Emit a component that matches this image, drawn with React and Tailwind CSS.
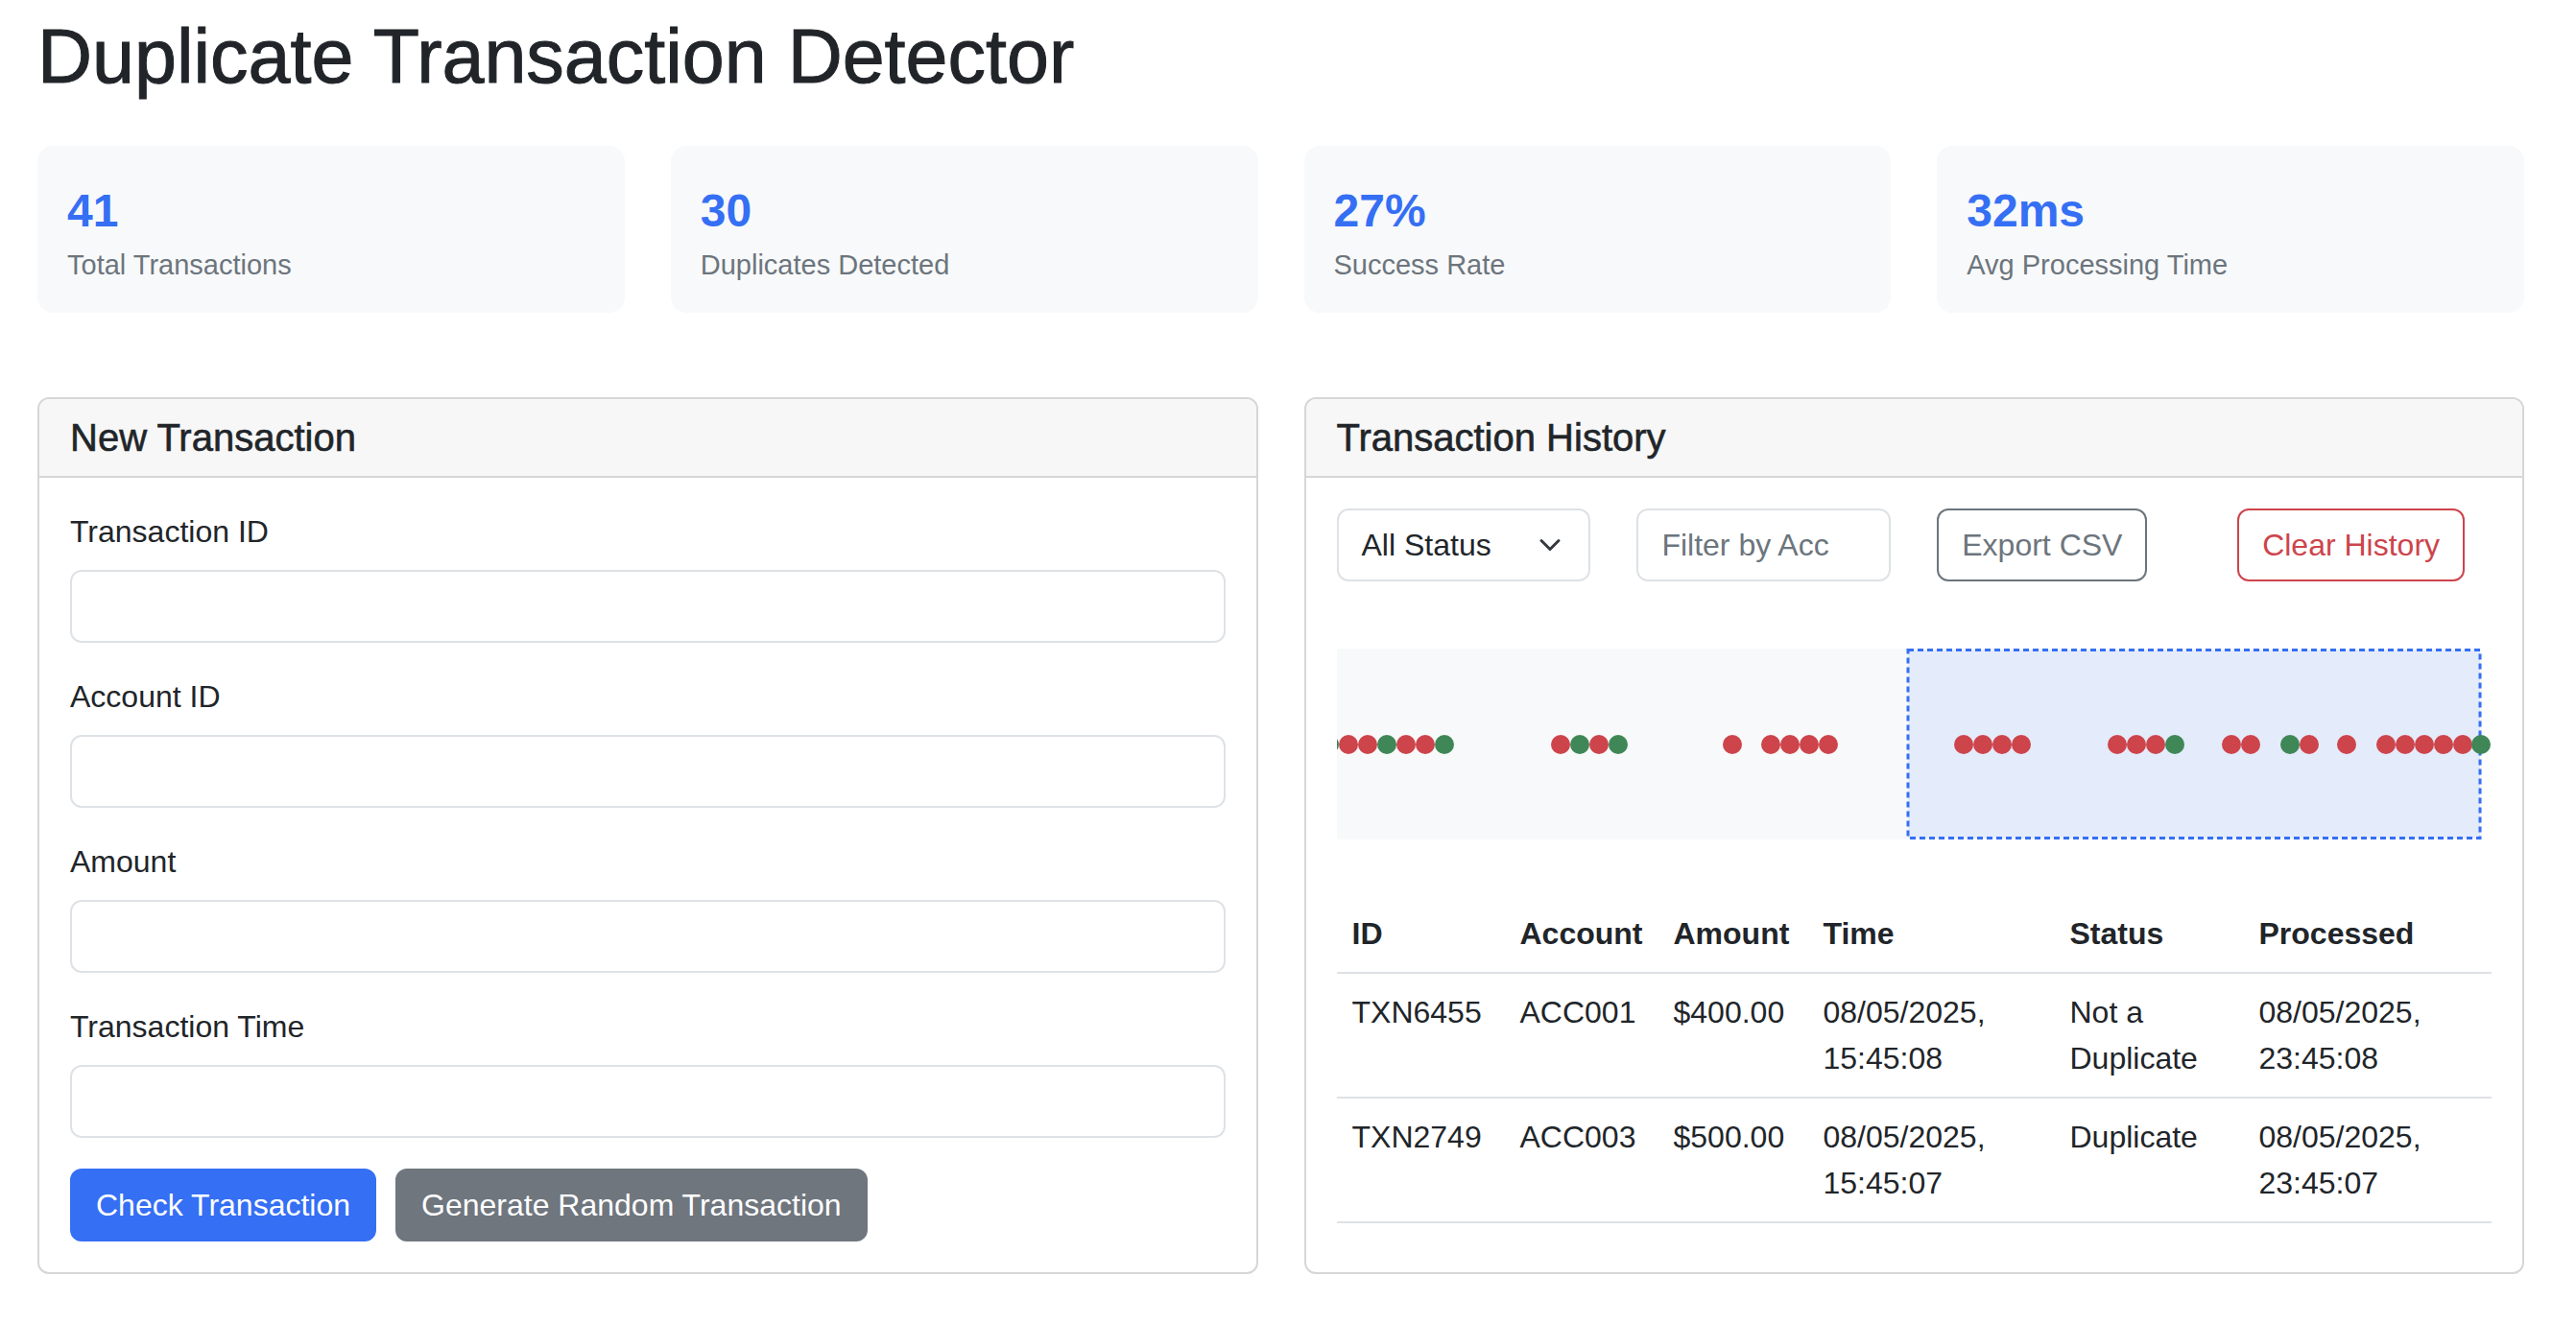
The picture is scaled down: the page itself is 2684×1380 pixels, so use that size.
import React from "react";

const stats = [
  { value: "41", label: "Total Transactions" },
  { value: "30", label: "Duplicates Detected" },
  { value: "27%", label: "Success Rate" },
  { value: "32ms", label: "Avg Processing Time" },
];

const formFields = ["Transaction ID", "Account ID", "Amount", "Transaction Time"];

const RED = "#cd444b";
const GREEN = "#3f8757";

// x offsets inside the timeline plot, status colour
const dots = [
  [-8, GREEN], [12, RED], [32, RED], [52, GREEN], [72, RED], [92, RED], [112, GREEN],
  [233, RED], [253, GREEN], [273, RED], [293, GREEN],
  [412, RED], [452, RED], [472, RED], [492, RED], [512, RED],
  [653, RED], [673, RED], [693, RED], [713, RED],
  [813, RED], [833, RED], [853, RED], [873, GREEN],
  [932, RED], [952, RED], [993, GREEN], [1013, RED], [1052, RED],
  [1093, RED], [1113, RED], [1133, RED], [1153, RED], [1173, RED], [1192, GREEN],
];

const rows = [
  {
    id: "TXN6455",
    account: "ACC001",
    amount: "$400.00",
    time: "08/05/2025, 15:45:08",
    status: "Not a Duplicate",
    processed: "08/05/2025, 23:45:08",
  },
  {
    id: "TXN2749",
    account: "ACC003",
    amount: "$500.00",
    time: "08/05/2025, 15:45:07",
    status: "Duplicate",
    processed: "08/05/2025, 23:45:07",
  },
];

function StatCard({ value, label }) {
  return (
    <div className="bg-[#f8f9fa] rounded-[16px] h-[174px] px-[31px] pt-[39px]">
      <div className="text-[48px] leading-[58px] font-bold text-[#356ff4]">{value}</div>
      <div className="mt-[6px] text-[29px] leading-[42px] text-[#6c757d]">{label}</div>
    </div>
  );
}

function Panel({ title, children }) {
  return (
    <div className="border-2 border-[#d6d6d6] rounded-[12px] overflow-hidden flex flex-col bg-white">
      <div className="bg-[#f7f7f7] border-b-2 border-[#d6d6d6] px-[32px] py-[16px]">
        <h5 className="text-[40px] leading-[48px] text-[#212529] [-webkit-text-stroke:0.6px_#212529]">{title}</h5>
      </div>
      <div className="p-[32px] flex-1">{children}</div>
    </div>
  );
}

function Timeline() {
  return (
    <svg width="100%" height="199" className="block overflow-hidden">
      <rect x="0" y="0" width="1193" height="199" fill="#f8f9fa" />
      <rect
        x="595"
        y="1.5"
        width="596"
        height="196"
        fill="#e4ebfa"
        stroke="#356ff4"
        strokeWidth="3"
        strokeDasharray="6 4"
      />
      {dots.map(([x, c], i) => (
        <circle key={i} cx={x} cy="100" r="10" fill={c} />
      ))}
    </svg>
  );
}

export default function App() {
  return (
    <div className="h-[1380px] overflow-hidden w-full bg-white font-['Liberation_Sans',Arial,sans-serif] text-[#212529]">
      <div className="ml-[39px] w-[2591px] pt-[11px]">
        <h1 className="text-[79px] leading-[96px] text-[#212529] [-webkit-text-stroke:1px_#212529]">
          Duplicate Transaction Detector
        </h1>

        <div className="mt-[45px] grid grid-cols-4 gap-[48px]">
          {stats.map((s) => (
            <StatCard key={s.label} value={s.value} label={s.label} />
          ))}
        </div>

        <div className="mt-[88px] grid grid-cols-2 gap-[48px] items-stretch">
          <Panel title="New Transaction">
            {formFields.map((f) => (
              <div key={f} className="mb-[32px]">
                <label className="block text-[32px] leading-[48px] mb-[16px]">{f}</label>
                <input className="block w-full h-[76px] bg-white border-2 border-[#dee2e6] rounded-[12px] px-[24px] text-[32px] outline-none" />
              </div>
            ))}
            <div className="flex gap-[20px]">
              <button className="h-[76px] px-[25px] rounded-[12px] bg-[#356ff4] border-2 border-[#356ff4] text-white text-[32px] leading-[48px]">
                Check Transaction
              </button>
              <button className="h-[76px] px-[25px] rounded-[12px] bg-[#6f767e] border-2 border-[#6f767e] text-white text-[32px] leading-[48px]">
                Generate Random Transaction
              </button>
            </div>
          </Panel>

          <Panel title="Transaction History">
            <div className="grid grid-cols-4 gap-[48px]">
              <div className="h-[76px] border-2 border-[#dee2e6] rounded-[12px] pl-[24px] pr-[28px] flex items-center justify-between text-[32px]">
                <span>All Status</span>
                <svg width="24" height="24" viewBox="0 0 16 16" fill="none">
                  <path d="m2 5 6 6 6-6" stroke="#343a40" strokeWidth="2" strokeLinecap="round" strokeLinejoin="round" />
                </svg>
              </div>
              <input
                placeholder="Filter by Acc"
                className="h-[76px] w-full border-2 border-[#dee2e6] rounded-[12px] px-[24px] text-[32px] placeholder:text-[#6c757d] outline-none"
              />
              <div>
                <button className="h-[76px] px-[24px] rounded-[12px] border-2 border-[#6c757d] text-[#6c757d] text-[32px] leading-[48px]">
                  Export CSV
                </button>
              </div>
              <div>
                <button className="h-[76px] px-[24px] rounded-[12px] border-2 border-[#cd444b] text-[#cd444b] text-[32px] leading-[48px]">
                  Clear History
                </button>
              </div>
            </div>

            <div className="mt-[70px]">
              <Timeline />
            </div>

            <table className="mt-[58px] w-full table-fixed border-collapse text-[32px] leading-[48px]">
              <colgroup>
                <col className="w-[175px]" />
                <col className="w-[160px]" />
                <col className="w-[156px]" />
                <col className="w-[257px]" />
                <col className="w-[197px]" />
                <col />
              </colgroup>
              <thead>
                <tr className="border-b-2 border-[#dee2e6]">
                  {["ID", "Account", "Amount", "Time", "Status", "Processed"].map((h) => (
                    <th key={h} className="text-left font-bold p-[16px] align-bottom">
                      {h}
                    </th>
                  ))}
                </tr>
              </thead>
              <tbody>
                {rows.map((r) => (
                  <tr key={r.id} className="border-b-2 border-[#dee2e6]">
                    <td className="p-[16px] align-top">{r.id}</td>
                    <td className="p-[16px] align-top">{r.account}</td>
                    <td className="p-[16px] align-top">{r.amount}</td>
                    <td className="p-[16px] align-top">{r.time}</td>
                    <td className="p-[16px] align-top">{r.status}</td>
                    <td className="p-[16px] align-top">{r.processed}</td>
                  </tr>
                ))}
              </tbody>
            </table>
          </Panel>
        </div>
      </div>
    </div>
  );
}
